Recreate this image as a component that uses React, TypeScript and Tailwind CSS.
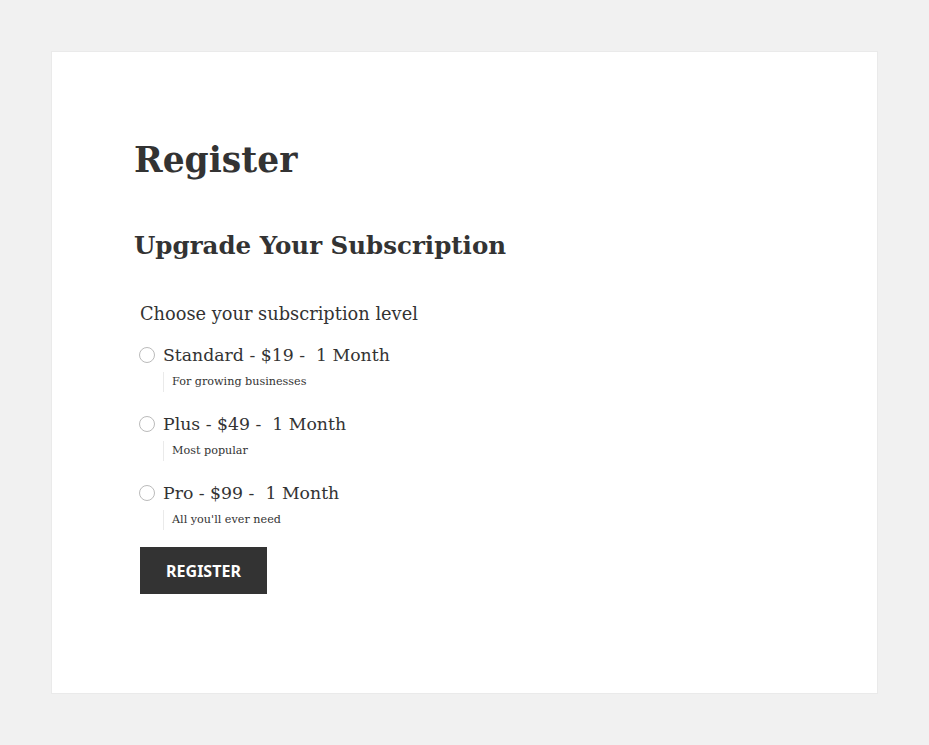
import React from "react";

const plans = [
  { label: "Standard - $19 -  1 Month", note: "For growing businesses" },
  { label: "Plus - $49 -  1 Month", note: "Most popular" },
  { label: "Pro - $99 -  1 Month", note: "All you'll ever need" },
];

const serif = "font-['DejaVu_Serif','Liberation_Serif',serif]";

export default function App() {
  return (
    <div className="min-h-[745px] w-full bg-[#f1f1f1] pt-[51px] pb-[52px]">
      <div className="ml-[51px] w-[827px] h-[643px] bg-white border border-[#eaeaea] pl-[82px] pt-[80px]">
        <h1 className={`${serif} text-[34.5px] leading-[56px] font-bold text-[#333]`}>Register</h1>

        <h2 className={`${serif} mt-[40px] text-[24.5px] leading-[36px] font-bold text-[#333]`}>
          Upgrade Your Subscription
        </h2>

        <form className="mt-[36px] pl-[5px]">
          <p className={`${serif} pl-[1px] text-[17.8px] leading-[28px] text-[#333]`}>
            Choose your subscription level
          </p>

          <ul className="mt-[15px] flex flex-col gap-[20px]">
            {plans.map((p) => (
              <li key={p.label}>
                <label className="flex items-center gap-[8px]">
                  <span className="w-[16px] h-[16px] rounded-full border border-[#bbb] bg-white shrink-0" />
                  <span className={`${serif} text-[17.3px] leading-[24px] text-[#333] whitespace-pre`}>{p.label}</span>
                </label>
                <p
                  className={`${serif} ml-[24px] mt-[5px] border-l border-[#eaeaea] pl-[8px] text-[11.2px] leading-[20px] text-[#333]`}
                >
                  {p.note}
                </p>
              </li>
            ))}
          </ul>

          <button
            type="button"
            className="mt-[17px] ml-[1px] w-[127px] h-[47px] bg-[#333] text-white font-['Noto_Sans',sans-serif] font-bold text-[16px] uppercase"
          >
            Register
          </button>
        </form>
      </div>
    </div>
  );
}
